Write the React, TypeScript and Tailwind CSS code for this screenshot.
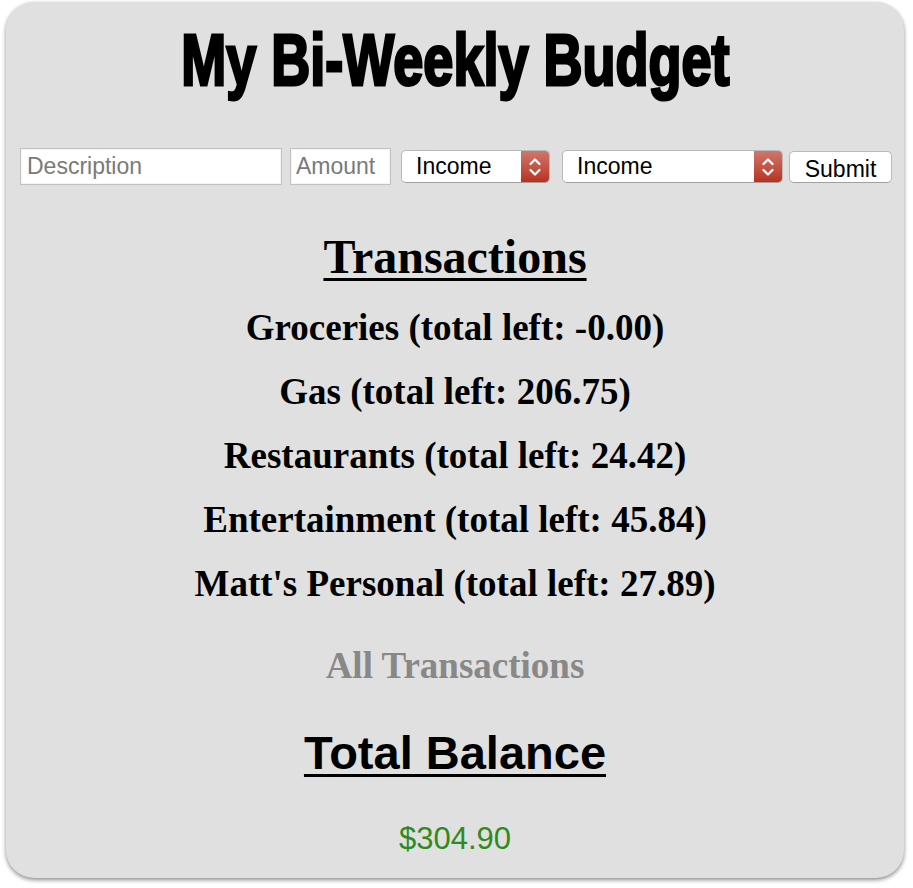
import React from "react";

const categories = [
  { name: "Groceries", left: "-0.00" },
  { name: "Gas", left: "206.75" },
  { name: "Restaurants", left: "24.42" },
  { name: "Entertainment", left: "45.84" },
  { name: "Matt's Personal", left: "27.89" },
];

function Chevrons() {
  return (
    <svg width="14" height="22" viewBox="0 0 14 22" fill="none">
      <path d="M2.5 8 L7 3.5 L11.5 8" stroke="white" strokeWidth="2.2" strokeLinecap="round" strokeLinejoin="round" />
      <path d="M2.5 14 L7 18.5 L11.5 14" stroke="white" strokeWidth="2.2" strokeLinecap="round" strokeLinejoin="round" />
    </svg>
  );
}

function FakeSelect({ width }: { width: string }) {
  return (
    <div
      className={`relative flex items-center h-[33px] ${width} bg-white rounded-[5px] border border-[#b9b9b9] border-b-[#a0a0a0] overflow-hidden`}
    >
      <span className="pl-[14px] text-[23px] text-black">Income</span>
      <div className="absolute right-0 top-0 bottom-0 w-[28px] flex items-center justify-center bg-gradient-to-b from-[#cf766c] to-[#b8301f]">
        <Chevrons />
      </div>
    </div>
  );
}

export default function App() {
  return (
    <div className="bg-white min-h-[888px] w-[913px] pt-[2px] pl-[6px]">
      <div
        className="w-[898px] h-[876px] bg-[#e0e0e0] rounded-[28px] shadow-[0_2px_4px_rgba(0,0,0,0.45)] flex flex-col items-center pt-[22px]"
        style={{ fontFamily: '"Liberation Sans", Arial, sans-serif' }}
      >
        <h1 className="text-[72px] leading-none font-bold text-black scale-x-75 [-webkit-text-stroke:3px_black] whitespace-nowrap">
          My Bi-Weekly Budget
        </h1>

        <div className="self-start ml-[14px] mt-[52px] flex items-center h-[37px] text-[23px]">
          <input
            placeholder="Description"
            className="w-[262px] h-[37px] bg-white border border-[#c2c2c2] shadow-[inset_0_0_0_1px_#f4f4f4] pl-[6px] placeholder:text-[#7a7a7a] outline-none"
          />
          <input
            placeholder="Amount"
            className="ml-[8px] w-[101px] h-[37px] bg-white border border-[#c2c2c2] shadow-[inset_0_0_0_1px_#f4f4f4] pl-[5px] placeholder:text-[#7a7a7a] outline-none"
          />
          <div className="ml-[10px]">
            <FakeSelect width="w-[149px]" />
          </div>
          <div className="ml-[12px]">
            <FakeSelect width="w-[221px]" />
          </div>
          <button className="ml-[6px] w-[103px] h-[32px] bg-white rounded-[5px] border border-[#b9b9b9] border-b-[#a0a0a0] text-[23px] text-black">
            Submit
          </button>
        </div>

        <div style={{ fontFamily: '"Liberation Serif", "Times New Roman", serif' }} className="flex flex-col items-center">
          <h2 className="mt-[48px] text-[48px] leading-none font-bold underline decoration-[3px] underline-offset-[5px]">
            Transactions
          </h2>
          <ul className="mt-[15px] flex flex-col items-center">
            {categories.map((c) => (
              <li key={c.name} className="text-[37px] leading-[64px] font-bold text-black">
                {c.name} (total left: {c.left})
              </li>
            ))}
          </ul>
          <p className="mt-[18px] text-[37px] leading-[64px] font-bold text-[#888888]">All Transactions</p>
        </div>

        <h2 className="mt-[31px] text-[47px] leading-none font-bold underline decoration-[3px] underline-offset-[5px]">
          Total Balance
        </h2>
        <p className="mt-[47px] text-[31px] leading-none text-[#2f8a20]">$304.90</p>
      </div>
    </div>
  );
}
